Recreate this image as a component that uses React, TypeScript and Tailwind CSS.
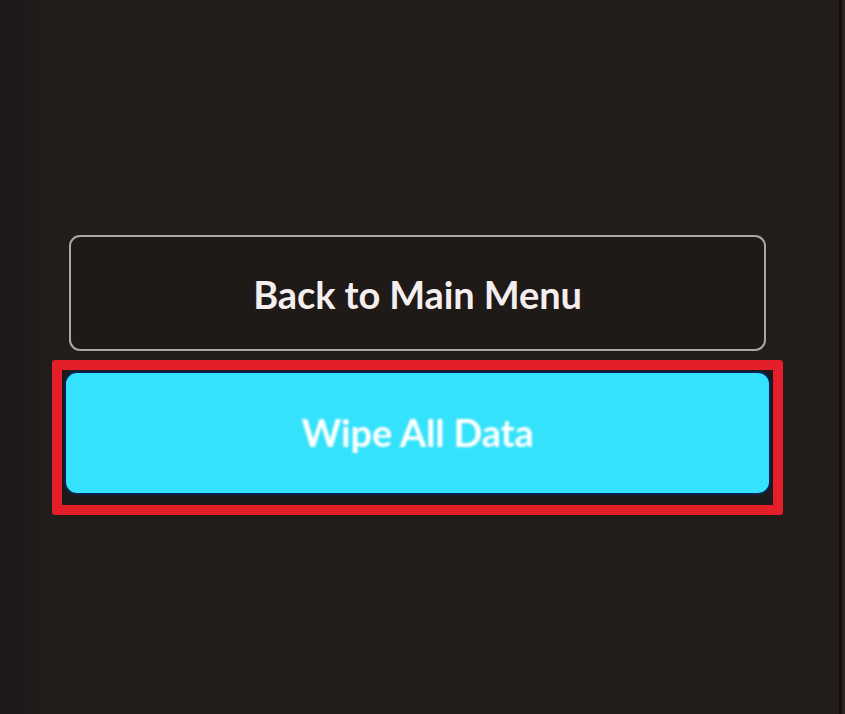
export default function App() {
  return (
    <div className="flex h-[714px] w-full overflow-hidden bg-[#221c1b] font-['Lato',_'Liberation_Sans',_sans-serif]">
      {/* left edge of the panel is a touch darker */}
      <div className="w-[52px] shrink-0 bg-gradient-to-r from-[#1c1817] to-[#221c1b]" />

      <div className="flex w-[731px] shrink-0 flex-col pt-[235px]">
        <button className="ml-[17px] flex h-[116px] w-[697px] items-center justify-center rounded-[11px] border-2 border-[#aba7a6] bg-[#1f1918]">
          <span className="pt-[2px] text-[38px] font-bold tracking-[-0.1px] text-[#f4efee]">Back to Main Menu</span>
        </button>

        {/* highlighted action */}
        <div className="mt-[9px] h-[155px] w-[731px] rounded-[3px] border-[10px] border-[#e41f2a] bg-[#1d1a1c] px-[2px] pb-[8px] pt-[1px]">
          <button className="flex h-[124px] w-full items-center justify-center rounded-[13px] border-2 border-[#0c2150] bg-[#34e2fb]">
            <span className="pb-[1px] text-[38px] font-bold tracking-[-0.2px] text-white blur-[1.2px]">Wipe All Data</span>
          </button>
        </div>
      </div>

      <div className="flex-1" />
      {/* bezel edge */}
      <div className="w-[3px] shrink-0 bg-[#141010]" />
      <div className="w-[3px] shrink-0 bg-[#2a2322]" />
    </div>
  );
}
